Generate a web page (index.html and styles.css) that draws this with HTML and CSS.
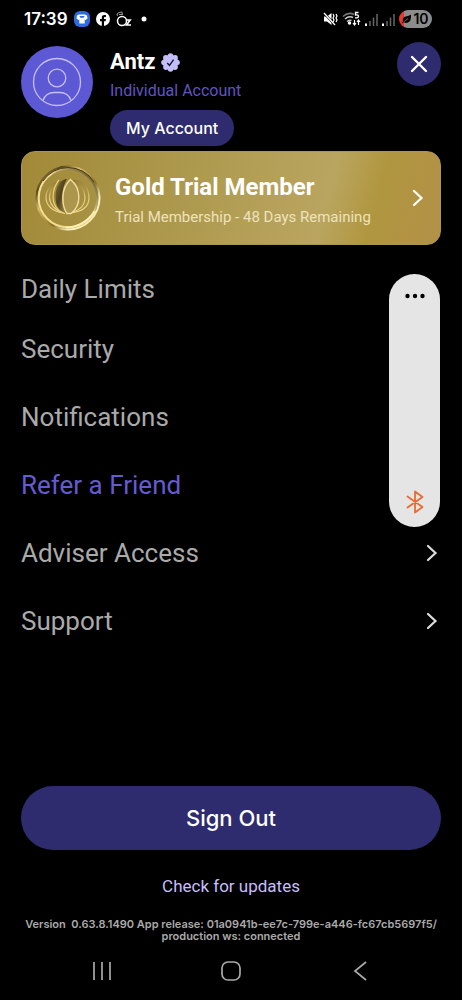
FILE: index.html
```html
<!DOCTYPE html>
<html lang="en">
<head>
<meta charset="utf-8">
<meta name="viewport" content="width=device-width, initial-scale=1">
<title>Account menu</title>
<link rel="stylesheet" href="styles.css">
</head>
<body>
<div class="status">
  <div class="status-left">
    <span class="clock">17:39</span>
    <svg width="16" height="16" viewBox="0 0 16 16"><rect width="16" height="16" rx="6" fill="#2f6be0"/><path d="M3 4.500 5 3.500h6l2 1 .5 3-2 1.500-.8-.5V12.500H5.300V8.500l-.8.5-2-1.500z" fill="#fff"/><path d="M5.500 5h5l-.8 1.800H6.300z" fill="#2f6be0"/></svg>
    <svg width="14" height="14" viewBox="0 0 14 14"><circle cx="7" cy="7" r="7" fill="#fff"/><path d="M5.800 14V9.200H4V7.100h1.800V5.600C5.800 3.800 6.900 3 8.400 3l1.500.1V5H9c-.8 0-1 .4-1 1v1.100h1.900l-.3 2.100H8V14z" fill="#000"/></svg>
    <svg width="16" height="16" viewBox="0 0 16 16" fill="none" stroke="#fff"><circle cx="6" cy="10" r="4.500" stroke-width="1.500"/><path d="M10 9H14.200L10.500 14h4.500" stroke-width="1.600"/><path d="M1.500 5 1 3l2-1.500L6 1l.5 3M3 3.500h3" stroke="#999"/></svg>
    <svg class="more-dot" width="6" height="6" viewBox="0 0 6 6"><circle cx="3" cy="3" r="2.500" fill="#fff"/></svg>
  </div>
  <div class="status-right">
    <svg width="15" height="14" viewBox="0 0 15 14"><path d="M1 4.500h3L8.500 1v12L4 9.500H1z" fill="#fff"/><path d="M1 1l11 12" stroke="#000" stroke-width="2.500"/><path d="M1 1l11 12" stroke="#fff" stroke-width="1.300"/><path d="M10 2l1 2-1 2 1 2-1 2M13 2l1 2-1 2 1 2-1 2" fill="none" stroke="#fff" stroke-width="1.200"/></svg>
    <svg width="19" height="16" viewBox="0 0 19 16" fill="none" stroke="#ccc" stroke-width="1.500"><path d="M1 5.500Q6.500.5 12 3.500" stroke="#777"/><path d="M3 8Q7 4.500 11 6.500M5 10.500Q7 8.500 9.500 9.500"/><circle cx="7.500" cy="12" r="1" fill="#fff" stroke="#fff"/><path d="M16.500 1.500h-3V4q3-.5 3 1.300T13 6.800" stroke="#fff" stroke-width="1.300"/><path d="M12.500 9v4.500M11 12l1.500 2 1.500-2M16.500 14V9.500M15 11l1.500-2 1.500 2" stroke="#fff" stroke-width="1.200"/></svg>
    <svg width="13" height="13" viewBox="0 0 13 13"><path d="M1 10.500v2.500" stroke="#fff" stroke-width="2"/><path d="M5 8v5M8.500 4.500V13M12 1v12" stroke="#666" stroke-width="1.500"/></svg>
    <svg width="13" height="13" viewBox="0 0 13 13"><path d="M1 10.500v2.500" stroke="#fff" stroke-width="2"/><path d="M5 8v5M8.500 4.500V13M12 1v12" stroke="#666" stroke-width="1.500"/></svg>
    <span class="battery"><svg width="9" height="10" viewBox="0 0 9 10"><path d="M9 .5Q9.500 9 4 9 2.500 9 2 8L.5 9.500 0 8.500 1 7.500Q0 3 4 2.500 7 2 9 .5z" fill="#000"/><path d="M1.500 8 6 4.500" stroke="#999" stroke-width=".7"/></svg>10</span>
  </div>
</div>

<main class="screen">
  <header class="profile">
    <svg class="avatar" width="72" height="72" viewBox="0 0 72 72" fill="none" stroke="#c5bffb" stroke-width="1.300"><circle cx="36" cy="36" r="36" fill="#5d58d3" stroke="none"/><circle cx="36" cy="36" r="23.500"/><circle cx="36" cy="32" r="8.800"/><path d="M22 54.500C23.500 49.500 28 46.500 33 46.500h6c5 0 9.500 3 11 8"/></svg>
    <div class="identity">
      <h1 class="name">Antz
        <svg width="19" height="19" viewBox="0 0 19 19"><g fill="#c3bdfa"><circle cx="9.500" cy="9.500" r="7.500"/><circle cx="9.500" cy="3" r="2.800"/><circle cx="14.100" cy="4.900" r="2.800"/><circle cx="16" cy="9.500" r="2.800"/><circle cx="14.100" cy="14.100" r="2.800"/><circle cx="9.500" cy="16" r="2.800"/><circle cx="4.900" cy="14.100" r="2.800"/><circle cx="3" cy="9.500" r="2.800"/><circle cx="4.900" cy="4.900" r="2.800"/></g><path d="M6.200 10l2.300 2.300L12.600 6.600" fill="none" stroke="#17152f" stroke-width="1.400"/></svg>
      </h1>
      <p class="kind">Individual Account</p>
      <button class="account-btn" type="button">My Account</button>
    </div>
    <button class="close" type="button" aria-label="Close"><svg width="18" height="18" viewBox="0 0 18 18"><path d="M2 2l14 14M16 2 2 16" stroke="#fff" stroke-width="2.400" stroke-linecap="round"/></svg></button>
  </header>

  <a class="member" href="#membership">
    <svg width="66" height="66" viewBox="0 0 66 66" fill="none">
      <defs>
        <linearGradient id="rim" x1="0" y1="0" x2="1" y2="1"><stop offset="0" stop-color="#c9ad5c"/><stop offset=".2" stop-color="#5a4718"/><stop offset=".35" stop-color="#d9be70"/><stop offset=".6" stop-color="#8c6f27"/><stop offset=".75" stop-color="#fff3c0"/><stop offset="1" stop-color="#f3df94"/></linearGradient>
        <linearGradient id="edge" x1="1" y1="0" x2="0" y2="1"><stop offset="0" stop-color="#3d300f"/><stop offset=".45" stop-color="#efdc98"/><stop offset="1" stop-color="#f6e08b"/></linearGradient>
        <linearGradient id="line" x1="0" y1="0" x2="0" y2="1"><stop offset="0" stop-color="#8a722c"/><stop offset=".5" stop-color="#e3c978"/><stop offset="1" stop-color="#f0d98d"/></linearGradient>
        <linearGradient id="leaf" x1="0" y1="0" x2="1" y2="1"><stop offset="0" stop-color="#85733a"/><stop offset=".45" stop-color="#4f431d"/><stop offset=".8" stop-color="#8e7a3c"/></linearGradient>
      </defs>
      <circle cx="33" cy="33" r="31.500" stroke="url(#rim)" stroke-width="2"/>
      <circle cx="33" cy="33" r="29.300" stroke="url(#edge)" stroke-width="2"/>
      <path d="M8 16Q17 3 33 2.500 50 3 59 17" stroke="#4d3d14" stroke-width="1"/>
      <path d="M31 62.500Q49 62 60 46" stroke="#fdf0b4" stroke-width="2"/>
      <g stroke="url(#line)" stroke-width="1.200">
        <path d="M26 16C15 18 11 26 11 32.500s5 14.500 19 15.500"/>
        <path d="M26 17C17 20 14.500 27 14.500 32.500S19 46 30 48"/>
        <path d="M38 15c12 2 16 10 16 17.500S49 47 34 48"/>
        <path d="M38 16c9 4 12 10 12 16.500S46 46 34 48"/>
      </g>
      <path d="M31 14C23 16 20.500 24 20.500 32S24 47 31 48.500C25 38 26 24 32 14z" fill="url(#leaf)"/>
      <path d="M24 15C19 21 18 27 18 32.500S21 46 30 48.500" stroke="#e9cd78" stroke-width="1.200"/>
      <path d="M35.500 14.500C25.500 23 26.500 41 32 48.500h4C47 40 46 23 35.500 14.500z" fill="#ab964c" stroke="#f2dda0" stroke-width="1.400"/>
    </svg>
    <span class="member-text">
      <strong class="member-title">Gold Trial Member</strong>
      <span class="member-note">Trial Membership - 48 Days Remaining</span>
    </span>
    <svg width="12" height="18" viewBox="0 0 12 18" fill="none"><path d="M2 2l7.500 7L2 16" stroke="#fff" stroke-width="2.200" stroke-linecap="round"/></svg>
  </a>

  <nav class="menu">
    <a class="item first" href="#limits">Daily Limits</a>
    <a class="item" href="#security">Security</a>
    <a class="item" href="#notifications">Notifications</a>
    <a class="item active" href="#refer">Refer a Friend</a>
    <a class="item" href="#adviser">Adviser Access<svg width="16" height="18" viewBox="0 0 16 18" fill="none"><path d="M3 2l7.500 7L3 16" stroke="#ddd" stroke-width="2.200" stroke-linecap="round"/></svg></a>
    <a class="item" href="#support">Support<svg width="16" height="18" viewBox="0 0 16 18" fill="none"><path d="M3 2l7.500 7L3 16" stroke="#ddd" stroke-width="2.200" stroke-linecap="round"/></svg></a>
  </nav>

  <footer class="footer">
    <button class="signout" type="button">Sign Out</button>
    <a class="updates" href="#updates">Check for updates</a>
    <p class="version">Version&nbsp; 0.63.8.1490 App release: 01a0941b-ee7c-799e-a446-fc67cb5697f5/<br>production ws: connected</p>
  </footer>
</main>

<nav class="system" aria-label="System">
  <button type="button" aria-label="Recent apps"><svg width="20" height="20" viewBox="0 0 20 20"><path d="M2 1v18M10 1v18M18 1v18" stroke="#aaa" stroke-width="1.700"/></svg></button>
  <button type="button" aria-label="Home"><svg width="20" height="20" viewBox="0 0 20 20"><rect x="1" y="1" width="18" height="18" rx="6" fill="none" stroke="#aaa" stroke-width="1.700"/></svg></button>
  <button type="button" aria-label="Back"><svg width="20" height="20" viewBox="0 0 20 20"><path d="M16 1 5 10l11 9" fill="none" stroke="#aaa" stroke-width="1.700"/></svg></button>
</nav>

<aside class="volume" aria-label="Volume">
  <svg width="20" height="6" viewBox="0 0 20 6"><circle cx="2.500" cy="3" r="2.200"/><circle cx="10" cy="3" r="2.200"/><circle cx="17.500" cy="3" r="2.200"/></svg>
  <svg width="18" height="24" viewBox="0 0 18 24" fill="none" stroke="#ea6a32" stroke-width="1.800" stroke-linejoin="round" stroke-linecap="round"><path d="M1.500 6.500 16.500 17 9 22.500v-21L16.500 7 1.500 17.500"/></svg>
</aside>
</body>
</html>
```
FILE: styles.css
```css
* { box-sizing: border-box; }
body {
  margin: 0;
  min-height: 100vh;
  display: flex;
  flex-direction: column;
  position: relative;
  background: #000;
  color: #fff;
  font-family: Roboto, sans-serif;
}
h1, p { margin: 0; }
a { color: inherit; text-decoration: none; }
button { border: 0; padding: 0; color: #fff; background: none; font-family: inherit; }
svg { flex: none; display: block; }

.status {
  height: 38px;
  padding: 0 30px 0 24px;
  display: flex;
  align-items: center;
  justify-content: space-between;
}
.status-left, .status-right { display: flex; align-items: center; }
.status-left { gap: 6px; }
.status-right { gap: 4px; }
.clock { font: 600 17px/20px Inter, sans-serif; }
.more-dot { margin-left: 3px; }
.battery {
  width: 33px;
  height: 18px;
  border-radius: 9px;
  display: flex;
  align-items: center;
  justify-content: center;
  gap: 2px;
  color: #000;
  background: linear-gradient(90deg, #e8392e 5px, #8c8c8c 5px);
  font: 600 14px/18px Inter, sans-serif;
}

.screen {
  flex: 1;
  display: flex;
  flex-direction: column;
  padding: 4px 21px 0;
}
.profile { display: flex; align-items: flex-start; }
.avatar { margin-top: 4px; }
.identity { flex: 1; padding: 4px 0 0 17px; }
.name {
  display: flex;
  align-items: center;
  gap: 6px;
  font-size: 22px;
  line-height: 32px;
  font-weight: 700;
}
.kind { font-size: 16px; line-height: 26px; color: #5d54c4; }
.account-btn {
  height: 36px;
  margin-top: 6px;
  padding: 0 16px;
  border-radius: 18px;
  background: #2e2b6e;
  font: 500 16px/36px Inter, sans-serif;
}
.close {
  width: 44px;
  height: 44px;
  border-radius: 50%;
  display: grid;
  place-items: center;
  background: #2e2b6e;
}

.member {
  margin-top: 5px;
  min-height: 94px;
  padding: 0 16px 0 13px;
  display: flex;
  align-items: center;
  border: 1px solid #ab9650;
  border-radius: 14px;
  background: linear-gradient(105deg, #a18937 0%, #ad994d 38%, #b9a55f 72%, #b0963f 83%, #b39148 100%);
}
.member-text { flex: 1; padding: 2px 0 0 14px; }
.member-title, .member-note { display: block; }
.member-title { font-size: 24px; line-height: 32px; }
.member-note { margin-top: 4px; font-size: 15px; line-height: 20px; color: #eee2bd; }

.menu { margin-top: 18px; }
.item {
  height: 68px;
  display: flex;
  align-items: center;
  justify-content: space-between;
  color: #aaa;
  font-size: 26px;
}
.first { height: 52px; }
.active { color: #655bd0; }

.footer { margin-top: auto; text-align: center; }
.signout {
  width: 100%;
  height: 64px;
  border-radius: 32px;
  background: #2e2b6e;
  font: 500 22px/64px Inter, sans-serif;
}
.updates {
  display: block;
  margin-top: 22px;
  font-size: 17px;
  line-height: 28px;
  color: #c5bffa;
}
.version {
  margin: 18px -10px 0;
  font: 600 11px/12px Inter, sans-serif;
  color: #aaa;
}

.system {
  height: 58px;
  display: flex;
  align-items: center;
  justify-content: center;
  gap: 109px;
}

.volume {
  position: absolute;
  top: 274px;
  right: 22px;
  width: 51px;
  height: 253px;
  padding: 19px 0 13px;
  display: flex;
  flex-direction: column;
  align-items: center;
  justify-content: space-between;
  border-radius: 26px;
  background: #e5e5e5;
}
```
